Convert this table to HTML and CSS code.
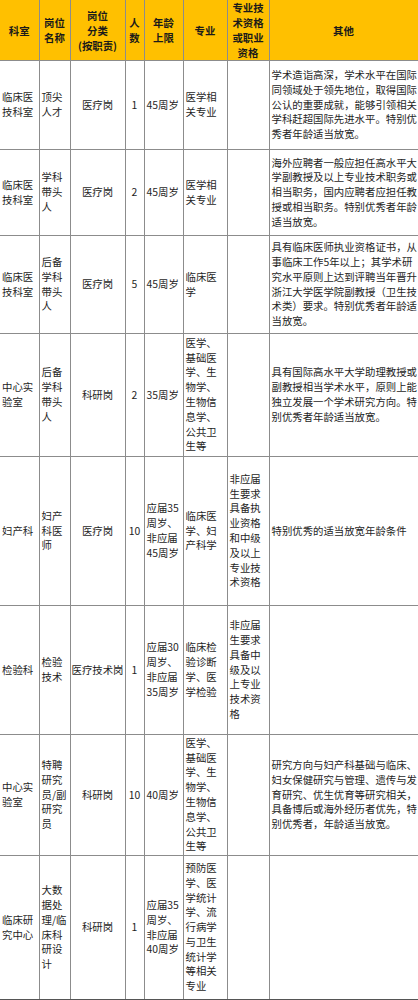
FILE: index.html
```html
<!DOCTYPE html>
<html lang="zh-CN">
<head>
<meta charset="utf-8">
<title>招聘岗位</title>
<link rel="stylesheet" href="styles.css">
</head>
<body>
<table class="jobs">
  <colgroup>
    <col class="c1"><col class="c2"><col class="c3"><col class="c4"><col class="c5"><col class="c6"><col class="c7"><col class="c8">
  </colgroup>
  <thead>
    <tr class="head">
      <th>科室</th>
      <th>岗位<br>名称</th>
      <th>岗位<br>分类<br>(按职责)</th>
      <th>人<br>数</th>
      <th>年龄<br>上限</th>
      <th>专业</th>
      <th>专业技<br>术资格<br>或职业<br>资格</th>
      <th>其他</th>
    </tr>
  </thead>
  <tbody>
    <tr class="r1">
      <td>临床医<br>技科室</td>
      <td>顶尖<br>人才</td>
      <td class="ctr">医疗岗</td>
      <td class="ctr">1</td>
      <td>45周岁</td>
      <td>医学相<br>关专业</td>
      <td></td>
      <td>学术造诣高深，学术水平在国际<br>同领域处于领先地位，取得国际<br>公认的重要成就，能够引领相关<br>学科赶超国际先进水平。特别优<br>秀者年龄适当放宽。</td>
    </tr>
    <tr class="r2">
      <td>临床医<br>技科室</td>
      <td>学科<br>带头<br>人</td>
      <td class="ctr">医疗岗</td>
      <td class="ctr">2</td>
      <td>45周岁</td>
      <td>医学相<br>关专业</td>
      <td></td>
      <td>海外应聘者一般应担任高水平大<br>学副教授及以上专业技术职务或<br>相当职务，国内应聘者应担任教<br>授或相当职务。特别优秀者年龄<br>适当放宽。</td>
    </tr>
    <tr class="r3">
      <td>临床医<br>技科室</td>
      <td>后备<br>学科<br>带头<br>人</td>
      <td class="ctr">医疗岗</td>
      <td class="ctr">5</td>
      <td>45周岁</td>
      <td>临床医<br>学</td>
      <td></td>
      <td>具有临床医师执业资格证书，从<br>事临床工作5年以上；其学术研<br>究水平原则上达到评聘当年晋升<br>浙江大学医学院副教授（卫生技<br>术类）要求。特别优秀者年龄适<br>当放宽。</td>
    </tr>
    <tr class="r4">
      <td>中心实<br>验室</td>
      <td>后备<br>学科<br>带头<br>人</td>
      <td class="ctr">科研岗</td>
      <td class="ctr">2</td>
      <td>35周岁</td>
      <td>医学、<br>基础医<br>学、生<br>物学、<br>生物信<br>息学、<br>公共卫<br>生等</td>
      <td></td>
      <td>具有国际高水平大学助理教授或<br>副教授相当学术水平，原则上能<br>独立发展一个学术研究方向。特<br>别优秀者年龄适当放宽。</td>
    </tr>
    <tr class="r5">
      <td>妇产科</td>
      <td>妇产<br>科医<br>师</td>
      <td class="ctr">医疗岗</td>
      <td class="ctr">10</td>
      <td>应届35<br>周岁、<br>非应届<br>45周岁</td>
      <td>临床医<br>学、妇<br>产科学</td>
      <td>非应届<br>生要求<br>具备执<br>业资格<br>和中级<br>及以上<br>专业技<br>术资格</td>
      <td>特别优秀的适当放宽年龄条件</td>
    </tr>
    <tr class="r6">
      <td>检验科</td>
      <td>检验<br>技术</td>
      <td class="ctr">医疗技术岗</td>
      <td class="ctr">1</td>
      <td>应届30<br>周岁、<br>非应届<br>35周岁</td>
      <td>临床检<br>验诊断<br>学、医<br>学检验</td>
      <td>非应届<br>生要求<br>具备中<br>级及以<br>上专业<br>技术资<br>格</td>
      <td></td>
    </tr>
    <tr class="r7">
      <td>中心实<br>验室</td>
      <td>特聘<br>研究<br>员/副<br>研究<br>员</td>
      <td class="ctr">科研岗</td>
      <td class="ctr">10</td>
      <td>40周岁</td>
      <td>医学、<br>基础医<br>学、生<br>物学、<br>生物信<br>息学、<br>公共卫<br>生等</td>
      <td></td>
      <td>研究方向与妇产科基础与临床、<br>妇女保健研究与管理、遗传与发<br>育研究、优生优育等研究相关，<br>具备博后或海外经历者优先，特<br>别优秀者，年龄适当放宽。</td>
    </tr>
    <tr class="r8">
      <td>临床研<br>究中心</td>
      <td>大数<br>据处<br>理/临<br>床科<br>研设<br>计</td>
      <td class="ctr">科研岗</td>
      <td class="ctr">1</td>
      <td>应届35<br>周岁、<br>非应届<br>40周岁</td>
      <td>预防医<br>学、医<br>学统计<br>学、流<br>行病学<br>与卫生<br>统计学<br>等相关<br>专业</td>
      <td></td>
      <td></td>
    </tr>
  </tbody>
</table>
</body>
</html>
```

FILE: styles.css
```css
html, body {
  margin: 0;
  padding: 0;
  background: #ffffff;
}

.jobs {
  width: 418px;
  table-layout: fixed;
  border-collapse: collapse;
  font-family: "Noto Sans CJK SC", "Noto Sans", sans-serif;
  font-size: 10.4px;
  line-height: 14.8px;
  color: #1e1e1e;
}

.c1 { width: 39px; }
.c2 { width: 31px; }
.c3 { width: 55px; }
.c4 { width: 19px; }
.c5 { width: 39px; }
.c6 { width: 44px; }
.c7 { width: 42px; }
.c8 { width: 149px; }

.jobs th,
.jobs td {
  border: 1px solid #8c8c8c;
  padding: 0 0 0 2px;
  vertical-align: middle;
  white-space: nowrap;
  overflow: hidden;
  text-align: left;
}

.jobs th:first-child,
.jobs td:first-child {
  border-left: none;
}

.jobs th:last-child,
.jobs td:last-child {
  border-right: 1px solid #555555;
}

.jobs tbody tr:last-child td {
  border-bottom: 1px solid #555555;
}

.jobs thead tr.head th {
  border-top: none;
}

.head {
  height: 60px;
  background: #ffc000;
}

.head th {
  font-weight: bold;
  text-align: center;
  line-height: 15px;
  padding: 0;
  color: #1a1a1a;
}

.jobs td.ctr {
  text-align: center;
  padding: 0;
}

.r1 { height: 89px; }
.r2 { height: 86px; }
.r3 { height: 98px; }
.r4 { height: 123px; }
.r5 { height: 149px; }
.r6 { height: 129px; }
.r7 { height: 121px; }
.r8 { height: 144px; }
```
